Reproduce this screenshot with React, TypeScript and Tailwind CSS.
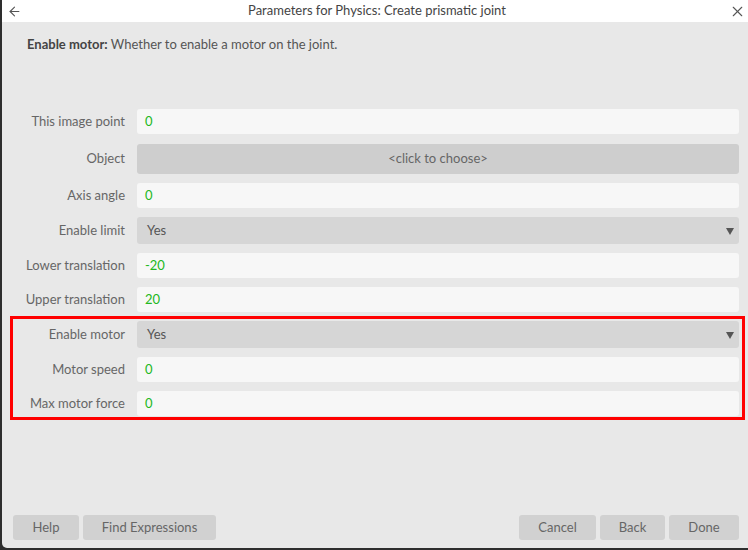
import { ArrowLeft, X } from "lucide-react";

const font = { fontFamily: "Lato, 'Open Sans', sans-serif" };

function Label({ text }: { text: string }) {
    return <div className="w-[123px] shrink-0 text-right text-[13px] text-[#666]">{text}</div>;
}

function TextRow({ label, value }: { label: string; value: string }) {
    return (
        <div className="flex items-center gap-[12px]">
            <Label text={label} />
            <div className="flex-1 h-[25px] rounded-[3px] bg-[#f7f7f7] flex items-center pl-[8px] text-[13px] text-[#22b822]">
                {value}
            </div>
        </div>
    );
}

function SelectRow({ label, value }: { label: string; value: string }) {
    return (
        <div className="flex items-center gap-[12px]">
            <Label text={label} />
            <div className="flex-1 h-[27px] rounded-[3px] bg-[#d6d6d6] flex items-center justify-between pl-[10px] pr-[5px] text-[13px] text-[#555]">
                <span>{value}</span>
                <svg width="8" height="7" viewBox="0 0 8 7" className="mt-[1px]">
                    <path d="M0 0 H8 L4 7 Z" fill="#555" />
                </svg>
            </div>
        </div>
    );
}

function Btn({ children, w }: { children: string; w: string }) {
    return (
        <button className={`${w} h-[25px] rounded-[3px] bg-[#d1d1d1] text-[13px] text-[#666]`}>{children}</button>
    );
}

export default function App() {
    return (
        <div className="w-[748px] h-[550px] bg-[#2e2e2e] overflow-hidden" style={font}>
            <div className="relative ml-[2px] w-[746px] h-[548px] bg-[#e8e8e8] rounded-bl-[5px] flex flex-col">
                <div className="h-[22px] bg-white flex items-center justify-between pl-[5px] pr-[2px] text-[#555]">
                    <ArrowLeft className="h-[15px] w-[15px]" strokeWidth={1.75} />
                    <span className="text-[13px] text-[#444] ml-[3px]">Parameters for Physics: Create prismatic joint</span>
                    <X className="h-[17px] w-[17px]" strokeWidth={1.5} />
                </div>
                <div className="pl-[25px] pt-[14px] text-[13px] leading-[16px] text-[#555]">
                    <span className="font-bold text-[#444]">Enable motor:</span> Whether to enable a motor on the joint.
                </div>
                <div className="mt-[57px] pr-[9px] flex flex-col gap-[9px]">
                    <TextRow label="This image point" value="0" />
                    <div className="flex items-center gap-[12px]">
                        <Label text="Object" />
                        <div className="flex-1 h-[30px] mt-[1px] rounded-[3px] bg-[#cecece] flex items-center justify-center text-[13px] text-[#666]">
                            &lt;click to choose&gt;
                        </div>
                    </div>
                    <TextRow label="Axis angle" value="0" />
                    <SelectRow label="Enable limit" value="Yes" />
                    <TextRow label="Lower translation" value="-20" />
                    <TextRow label="Upper translation" value="20" />
                    <SelectRow label="Enable motor" value="Yes" />
                    <TextRow label="Motor speed" value="0" />
                    <TextRow label="Max motor force" value="0" />
                </div>
                <div className="flex-1" />
                <div className="flex items-center justify-between pl-[11px] pr-[9px] pb-[8px]">
                    <div className="flex gap-[4px]">
                        <Btn w="w-[66px]">Help</Btn>
                        <Btn w="w-[133px]">Find Expressions</Btn>
                    </div>
                    <div className="flex gap-[4px]">
                        <Btn w="w-[77px]">Cancel</Btn>
                        <Btn w="w-[65px]">Back</Btn>
                        <Btn w="w-[70px]">Done</Btn>
                    </div>
                </div>
                <div className="absolute left-[8px] top-[316px] w-[735px] h-[104px] border-[3px] border-[#ff0000]" />
            </div>
        </div>
    );
}
